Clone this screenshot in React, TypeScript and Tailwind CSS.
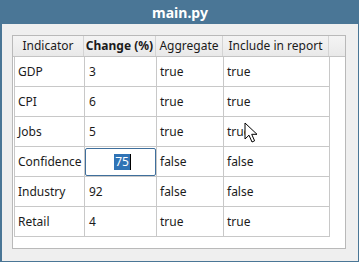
const rows = [
  { name: "GDP", change: "3", agg: "true", inc: "true" },
  { name: "CPI", change: "6", agg: "true", inc: "true" },
  { name: "Jobs", change: "5", agg: "true", inc: "true" },
  { name: "Confidence", change: "75", agg: "false", inc: "false" },
  { name: "Industry", change: "92", agg: "false", inc: "false" },
  { name: "Retail", change: "4", agg: "true", inc: "true" },
];

const font = { fontFamily: '"Noto Sans", "Open Sans", sans-serif' };

function Cursor() {
  return (
    <svg
      className="absolute left-[244px] top-[122px]"
      width="14"
      height="22"
      viewBox="0 0 14 22"
    >
      <path
        d="M1 1 L1 17 L5 13.2 L8 20 L10.6 18.8 L7.7 12.3 L13 12.3 Z"
        fill="#ffffff"
        stroke="#000000"
        strokeWidth="1"
      />
    </svg>
  );
}

export default function App() {
  return (
    <div
      className="relative w-[359px] h-[262px] bg-[#4a7696] flex flex-col pl-[2px] pr-[1px] pb-[1px] text-[12px] text-[#1b1b1b]"
      style={font}
    >
      <div className="h-[24px] flex items-center justify-center text-white font-bold text-[14px]">
        main.py
      </div>
      <div className="flex-1 bg-[#efefef] pt-[11px] pl-[10px] pr-[11px] pb-[11px]">
        <div className="w-[334px] h-[214px] border border-[#b9b9b9] bg-white flex flex-col">
          {/* header */}
          <div className="flex h-[21px] bg-gradient-to-b from-[#f4f4f4] to-[#e9e9e9] border-b border-[#c4c4c4]">
            <div className="w-[71px] border-r border-[#d4d4d4] flex items-center justify-center">Indicator</div>
            <div className="w-[72px] border-r border-[#d4d4d4] flex items-center justify-center font-bold">Change (%)</div>
            <div className="w-[67px] border-r border-[#d4d4d4] flex items-center justify-center">Aggregate</div>
            <div className="w-[106px] border-r border-[#d4d4d4] flex items-center justify-center">Include in report</div>
          </div>
          {/* body */}
          <div className="pl-[1px]">
            {rows.map((r, i) => (
              <div key={r.name} className="flex h-[30px]">
                <div className="w-[71px] border-l border-r border-b border-[#c8c8c8] flex items-center pl-[3px]">
                  {r.name}
                </div>
                <div className="w-[72px] border-r border-b border-[#c8c8c8] flex items-center">
                  {i === 3 ? (
                    <div className="w-[71px] h-[28px] bg-white border border-[#3f6f9c] rounded-[2px] flex items-center justify-center pl-[4px]">
                      <span className="bg-[#3073b5] text-white px-[1px] leading-[16px]">75</span>
                      <span className="w-[1px] h-[16px] bg-black" />
                    </div>
                  ) : (
                    <span className="pl-[4px]">{r.change}</span>
                  )}
                </div>
                <div className="w-[67px] border-r border-b border-[#c8c8c8] flex items-center pl-[3px]">
                  {r.agg}
                </div>
                <div className="w-[106px] border-r border-b border-[#c8c8c8] flex items-center pl-[3px]">
                  {r.inc}
                </div>
              </div>
            ))}
          </div>
        </div>
      </div>
      <Cursor />
    </div>
  );
}
